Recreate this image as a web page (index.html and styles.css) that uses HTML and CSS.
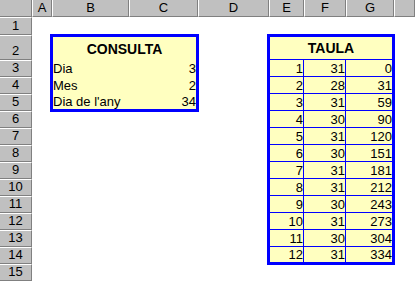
FILE: index.html
```html
<!DOCTYPE html>
<html lang="ca">
<head>
    <meta charset="UTF-8">
    <meta name="viewport" content="width=device-width, initial-scale=1.0">
    <title>Dia de l'any</title>
    <link rel="stylesheet" href="styles.css">
</head>

<body>
    <div class="sheet">
        <!-- column headers -->
        <div class="corner"></div>
        <div class="col-head">A</div>
        <div class="col-head">B</div>
        <div class="col-head">C</div>
        <div class="col-head">D</div>
        <div class="col-head">E</div>
        <div class="col-head">F</div>
        <div class="col-head">G</div>
        <div class="col-head"></div>

        <!-- row headers -->
        <div class="row-head">1</div>
        <div class="row-head">2</div>
        <div class="row-head">3</div>
        <div class="row-head">4</div>
        <div class="row-head">5</div>
        <div class="row-head">6</div>
        <div class="row-head">7</div>
        <div class="row-head">8</div>
        <div class="row-head">9</div>
        <div class="row-head">10</div>
        <div class="row-head">11</div>
        <div class="row-head">12</div>
        <div class="row-head">13</div>
        <div class="row-head">14</div>
        <div class="row-head">15</div>

        <!-- B2:C5 -->
        <div class="box consulta">
            <div class="title">CONSULTA</div>
            <div class="cell">Dia</div>
            <div class="cell num" id="dia">3</div>
            <div class="cell">Mes</div>
            <div class="cell num" id="mes">2</div>
            <div class="cell">Dia de l'any</div>
            <div class="cell num" id="diaAny">34</div>
        </div>

        <!-- E2:G14 -->
        <div class="box taula">
            <div class="title">TAULA</div>
            <div class="cell num">1</div><div class="cell num">31</div><div class="cell num">0</div>
            <div class="cell num">2</div><div class="cell num">28</div><div class="cell num">31</div>
            <div class="cell num">3</div><div class="cell num">31</div><div class="cell num">59</div>
            <div class="cell num">4</div><div class="cell num">30</div><div class="cell num">90</div>
            <div class="cell num">5</div><div class="cell num">31</div><div class="cell num">120</div>
            <div class="cell num">6</div><div class="cell num">30</div><div class="cell num">151</div>
            <div class="cell num">7</div><div class="cell num">31</div><div class="cell num">181</div>
            <div class="cell num">8</div><div class="cell num">31</div><div class="cell num">212</div>
            <div class="cell num">9</div><div class="cell num">30</div><div class="cell num">243</div>
            <div class="cell num">10</div><div class="cell num">31</div><div class="cell num">273</div>
            <div class="cell num">11</div><div class="cell num">30</div><div class="cell num">304</div>
            <div class="cell num">12</div><div class="cell num">31</div><div class="cell num">334</div>
        </div>
    </div>
</body>
</html>
```

FILE: styles.css
```css
body {
    font-family: "Liberation Sans", Arial, sans-serif;
    margin: 0;
    padding: 0;
    background: #fff;
    color: #000;
}
.sheet {
    width: 415px;
    height: 282px;
    overflow: hidden;
    display: grid;
    grid-template-columns: 32px 20px 77px 69px 71px 35px 42px 48px 1fr;
    grid-template-rows: 17px 18px 25px repeat(13, 17px);
}

/* grey headers */
.corner, .col-head, .row-head {
    box-sizing: border-box;
    background: #c0c0c0;
    font-size: 13px;
    line-height: 14px;
    display: flex;
    justify-content: center;
}
.corner {
    border-right: 1px solid #808080;
    border-bottom: 1px solid #808080;
}
.col-head {
    align-items: center;
    border-left: 1px solid #fff;
    border-right: 1px solid #808080;
    border-bottom: 1px solid #808080;
}
.row-head {
    grid-column: 1;
    align-items: flex-end;
    padding-bottom: 1px;
    border-top: 1px solid #fff;
    border-right: 1px solid #808080;
    border-bottom: 1px solid #808080;
}

/* yellow blocks with thick blue frame */
.box {
    background: #ffffc0;
    border: 3px solid #0000ff;
    margin: -1px -1px -1px -2px;
    display: grid;
    font-size: 13px;
    line-height: 15px;
}
.title {
    grid-column: 1 / -1;
    display: flex;
    align-items: center;
    justify-content: center;
    font-size: 14px;
    font-weight: bold;
    line-height: 16px;
}
.cell {
    box-sizing: border-box;
    display: flex;
    align-items: flex-end;
    white-space: nowrap;
}
.num {
    justify-content: flex-end;
}

.consulta {
    grid-column: 3 / 5;
    grid-row: 3 / 7;
    grid-template-columns: 1fr auto;
    grid-template-rows: 23px 17px 17px 1fr;
}
.consulta .cell {
    padding-bottom: 1px;
}

.taula {
    grid-column: 6 / 9;
    grid-row: 3 / 16;
    grid-template-columns: 34px 42px 1fr;
    grid-template-rows: 23px repeat(11, 17px) 1fr;
}
.taula .title {
    border-bottom: 1px solid #0000ff;
}
.taula .cell {
    border-bottom: 1px solid #0000ff;
}
.taula .cell:nth-child(3n+2),
.taula .cell:nth-child(3n+3) {
    border-right: 1px solid #0000ff;
}
.taula .cell:nth-last-child(-n+3) {
    border-bottom: none;
}
```
